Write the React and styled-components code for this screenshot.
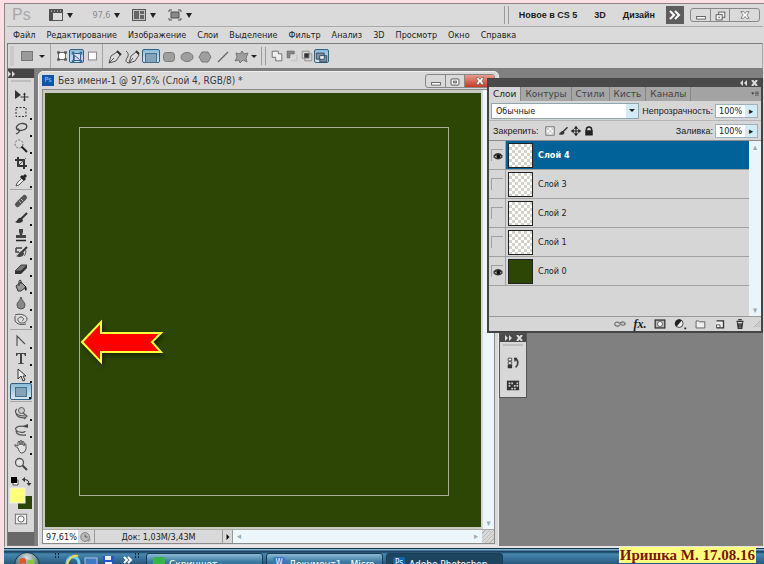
import React, { useState } from 'react'
import styled, { createGlobalStyle, css } from 'styled-components'

const menuItems = ['Файл', 'Редактирование', 'Изображение', 'Слои', 'Выделение', 'Фильтр', 'Анализ', '3D', 'Просмотр', 'Окно', 'Справка']

const toolGroups = [
  ['move', 'marquee', 'lasso', 'wand', 'crop', 'eyedropper'],
  ['heal', 'brush', 'stamp', 'history', 'eraser', 'bucket', 'blur', 'dodge'],
  ['path', 'type', 'select', 'rect'],
  ['rotate3d', 'orbit', 'hand', 'zoom'],
]

const shapeTools = ['pen', 'freePen', 'rect', 'rounded', 'ellipse', 'polygon', 'line', 'blob']

const startLayers = [
  { name: 'Слой 4', visible: true },
  { name: 'Слой 3', visible: false },
  { name: 'Слой 2', visible: false },
  { name: 'Слой 1', visible: false },
  { name: 'Слой 0', visible: true, filled: true },
]

// every drawing sits in a 16x16 box
const icons = {
  move: <><path d="M2 3v9l6-4z" fill="#333" /><path d="M11.500 6v8M7.500 10h8" stroke="#333" strokeWidth="1.200" /><path d="M10 7.500l1.500-2 1.500 2zM10 12.500l1.500 2 1.500-2z" fill="#333" /></>,
  marquee: <rect x="3" y="3.500" width="10" height="9" stroke="#333" strokeDasharray="2 1.500" />,
  lasso: <><path d="M5 9C1 7 5 2 10 2.500s5 5 0 6.500-6-1-5-1 2 3 0 4l-2 1" stroke="#444" strokeWidth="1.300" /></>,
  wand: <><circle cx="6" cy="6" r="4" stroke="#666" strokeDasharray="2 1.500" /><path d="M8.500 8.500L14 14" stroke="#222" strokeWidth="2" /></>,
  crop: <><path d="M5 2v9h9M2 5h9v9" stroke="#333" strokeWidth="2" /><path d="M4 12L13 3" stroke="#555" /></>,
  eyedropper: <><path d="M3 14l1-3 5-5 2 2-5 5z" fill="#eee" stroke="#555" /><path d="M8 4l4 4 M10 6l3-3" stroke="#222" strokeWidth="3" /></>,
  heal: <><path d="M4.500 11.500l7-7" stroke="#555" strokeWidth="5" strokeLinecap="round" /><path d="M6 8l2 2M8 6l2 2" stroke="#bbb" /></>,
  brush: <><path d="M14 3L8 9" stroke="#333" strokeWidth="2" /><path d="M8 8c-3-1-3 3-6 4 3 2 8 1 8-2z" fill="#333" /></>,
  stamp: <><path d="M6 2h4v3l-1 3h4v3H3V8h4L6 5z" fill="#444" /><path d="M3 13.500h10" stroke="#222" strokeWidth="1.500" /></>,
  history: <><path d="M3 4h6M3 4v4h3" stroke="#444" strokeWidth="1.500" /><path d="M14 3L9 8" stroke="#333" strokeWidth="2" /><path d="M9 7c-3 0-3 4-6 5 3 2 8 1 8-3z" fill="#444" /><path d="M11 4c3 2 2 6 0 8" stroke="#555" /></>,
  eraser: <><path d="M2 10l6-6h6l-6 6z" fill="#777" stroke="#444" /><path d="M2 10h6v3H2zM8 10l6-6v3l-6 6z" fill="#333" /></>,
  bucket: <><path d="M3 8l5-4 5 5-5 4H5z" fill="#999" stroke="#333" /><path d="M6 8V3q1.500-2 2 0v3" stroke="#333" /><path d="M12 8q3 2 1 5-2-1-1-5" fill="#222" /></>,
  blur: <path d="M8 2c1 4 4 5 4 8a4 4 0 0 1-8 0c0-3 3-4 4-8z" fill="#888" stroke="#555" />,
  dodge: <><path d="M2 3c5-2 12 0 12 4s-6 5-8 3-1-5 2-5 3 3 1 4" fill="#ddd" stroke="#555" /><path d="M2 4v5q3 5 11 3" stroke="#555" /></>,
  path: <path d="M4 13V3l8 8" stroke="#555" strokeWidth="1.200" />,
  type: <path d="M3 3h10v3h-1l-1-2H9v9l2 .5v.5H5v-.5l2-.5V4H5L4 6H3z" fill="#444" />,
  select: <path d="M5 2v10l3-3 2 5 2-1-2-4h3z" fill="#eee" stroke="#333" />,
  rect: <rect x="2.500" y="3.500" width="11" height="9" fill="#9a9a9a" stroke="#777" />,
  activeRect: <rect x="2.500" y="3.500" width="11" height="9" fill="#85a3b8" stroke="#47708c" />,
  rotate3d: <><circle cx="8.500" cy="5.500" r="3" fill="#ccc" stroke="#555" /><path d="M4 4c-4 3 0 7 8 7M3 8c0 4 6 5 10 5M10 8l4 3-3 3" stroke="#555" strokeWidth="1.200" /></>,
  orbit: <><path d="M13 5C7 3 1 5 3 8s9 3 9 1M3 9c1 5 6 4 10 4" stroke="#555" strokeWidth="1.300" /><path d="M10 4l5-2v4z" fill="#444" /></>,
  hand: <path d="M5 9L2 7q-1-2 1-1l2 1V3q1-2 2 0v3-4q1-1 2 0v4-3q1-1 2 0v4-2q2-1 2 1v4q-1 4-4 4H8q-2-1-3-5z" fill="#e2e2e2" stroke="#555" />,
  zoom: <><circle cx="6.500" cy="6.500" r="4" fill="#e4e4e4" stroke="#555" strokeWidth="1.300" /><path d="M9.500 9.500L14 14" stroke="#444" strokeWidth="2" /></>,
  frame: <><rect x="1.500" y="2.500" width="13" height="11" fill="#ddd" stroke="#555" /><path d="M1 2h14v4H1zM1 6h4v8H1z" fill="#505050" /><path d="M3 4h1M6 4h1M9 4h1M12 4h1" stroke="#ddd" /></>,
  arrange: <><rect x="1.500" y="2.500" width="13" height="11" fill="#c4c4c4" stroke="#555" /><path d="M3 4h5v8H3zM9 4h4v3H9zM9 8h4v4H9z" fill="#666" /></>,
  screen: <><rect x="4" y="5" width="8" height="6" fill="#888" stroke="#555" /><path d="M2 5V3h3M11 3h3v2M14 11v2h-3M5 13H2v-2" stroke="#555" /></>,
  shapeLayer: <><rect x="4" y="4" width="8" height="8" fill="#fff" stroke="#555" /><path d="M2.500 2.500h3v3h-3zM10.500 2.500h3v3h-3zM2.500 10.500h3v3h-3zM10.500 10.500h3v3h-3z" fill="#555" /></>,
  shapePath: <><path d="M4 4h8v8H4z" fill="#cde4f3" stroke="#347" /><path d="M2 2h3v3H2zM11 2h3v3h-3zM2 11h3v3H2zM11 11h3v3h-3z" fill="#357295" /><path d="M5 11V6l6 5" stroke="#347" /></>,
  pixels: <rect x="4" y="3.500" width="9" height="9" fill="#fff" stroke="#777" />,
  pen: <><path d="M2 14l2-7 6-4 3 3-4 6z" fill="#ddd" stroke="#555" /><path d="M2 14l5-5" stroke="#555" /><path d="M10 2l4 4" stroke="#333" strokeWidth="2" /></>,
  freePen: <><path d="M4 14l2-7 5-4 3 3-4 6z" fill="#ddd" stroke="#555" /><path d="M4 14l4-5M1 2q4 3 1 7t2 5" stroke="#555" /><path d="M11 2l3 3" stroke="#333" strokeWidth="2" /></>,
  rounded: <rect x="2.500" y="3.500" width="11" height="9" rx="3" fill="#9f9f9f" stroke="#777" />,
  ellipse: <ellipse cx="8" cy="8" rx="6" ry="4.500" fill="#9f9f9f" stroke="#777" />,
  polygon: <path d="M5 3h6l3 5-3 5H5L2 8z" fill="#9f9f9f" stroke="#777" />,
  line: <path d="M3 13L13 3" stroke="#666" strokeWidth="1.200" />,
  blob: <path d="M3 4l4 1 2-3 2 3 4-1-2 5 1 4-4-2-3 3-1-3-4 1 2-4z" fill="#9f9f9f" stroke="#777" />,
  add: <path d="M2.500 2.500h7v3h4v8h-7v-4h-4z" fill="#eee" stroke="#666" />,
  subtract: <><path d="M2.500 10V2.500h8v3h-5V10z" fill="#888" stroke="#666" /><path d="M6.500 13.500h7v-7" stroke="#bbb" /></>,
  intersect: <><path d="M2.500 2.500h8v8h-8zM5.500 5.500h8v8h-8z" stroke="#888" /><path d="M5 5h5v5H5z" fill="#333" /></>,
  exclude: <><path d="M1.500 3.500h9v7h-9zM5.500 6.500h8v7h-8z" fill="#7b93a3" stroke="#345" /><path d="M6 7h4v3H6z" fill="#eee" /></>,
  eye: <><path d="M2 7q6-6 12 0v3q-6 5-12 0z" fill="#333" /><path d="M3 9q5-4 10 0-5 3-10 0" fill="#bbb" /><circle cx="8.500" cy="8.500" r="2.500" fill="#111" /></>,
  checks: <><rect x="2.500" y="2.500" width="11" height="11" fill="#fff" stroke="#444" /><path d="M4 4h3v3H4zM10 4h3v3h-3zM7 7h3v3H7zM4 10h3v3H4zM10 10h3v3h-3z" fill="#ccc" /></>,
  arrows: <><path d="M8 3v10M3 8h10" stroke="#222" strokeWidth="1.500" /><path d="M5 5l3-4 3 4zM5 11l3 4 3-4zM5 5L1 8l4 3zM11 5l4 3-4 3z" fill="#222" /></>,
  lock: <><path d="M4.500 8V6a3.500 3.500 0 0 1 7 0v2" stroke="#222" strokeWidth="2" /><rect x="3" y="7" width="10" height="7" fill="#222" /></>,
  link: <path d="M8 9q-3 3-6 0 0-4 4-3l4 3q3 1 4-1-1-4-6-1" stroke="#777" strokeWidth="1.500" />,
  mask: <><rect x="2.500" y="3.500" width="11" height="9" fill="#bbb" stroke="#333" strokeWidth="1.500" /><circle cx="8" cy="8" r="2.800" fill="#fff" stroke="#555" /></>,
  quick: <><rect x="1.500" y="2.500" width="13" height="11" fill="#eee" stroke="#666" /><circle cx="8" cy="8" r="3.500" fill="#fff" stroke="#555" /></>,
  adjust: <><circle cx="7" cy="7.500" r="4.500" fill="#eee" stroke="#333" /><path d="M4 11A4.500 4.500 0 0 1 10 4z" fill="#222" /><path d="M13 12h2v2h-2z" fill="#222" /></>,
  folder: <path d="M3.500 12.500v-8h3l1 1h6v7z" fill="#eee" stroke="#555" />,
  newLayer: <><path d="M4 4.500h8v8H4" fill="#eee" stroke="#333" strokeWidth="1.500" /><path d="M4 9h4v3H4z" fill="#fff" stroke="#444" /></>,
  trash: <path d="M4 5h8M6 3h4M5 6l1 7h4l1-7M7 7v5M9 7v5" stroke="#333" strokeWidth="1.500" />,
  historyPanel: <><path d="M2.500 2.500h4v3h-4zM2.500 6.500h4v3h-4z" fill="#eee" stroke="#444" /><path d="M2 10h5v4H2z" fill="#333" /><path d="M10 3c4 1 5 6 1 10" stroke="#444" strokeWidth="2" /><path d="M9 2l4 0-3 5z" fill="#333" /></>,
  grid: <><rect x="1" y="3" width="14" height="11" fill="#333" /><path d="M3 5h2v2H3zM6 5h2v2H6zM12 5h2v2h-2zM3 8h2v2H3zM9 8h2v2H9zM12 8h2v2h-2zM6 11h2v2H6zM9 11h2v2H9z" fill="#ccc" /></>,
  minimize: <rect x="3" y="8.500" width="10" height="3" fill="#fff" stroke="#555" />,
  restore: <><rect x="6.500" y="3.500" width="7" height="6" fill="#eee" stroke="#555" /><rect x="3.500" y="6.500" width="7" height="6" fill="#eee" stroke="#555" /><path d="M6 9.500h2" stroke="#555" /></>,
  maximize: <><rect x="3.500" y="4.500" width="9" height="7" rx="1" fill="#fff" stroke="#444" /><rect x="6.500" y="7" width="3" height="2" stroke="#444" /></>,
  close: <path d="M2.500 3.500h3.500l2 2.500 2-2.500h3.500L10.500 8l3 4.500H10l-2-2.500-2 2.500H2.500l3-4.500z" fill="#fff" stroke="#666" />,
  chevrons: <path d="M3 4l4 4-4 4M8 4l4 4-4 4" stroke="#fff" strokeWidth="2" />,
  clock: <><circle cx="7" cy="8" r="5" fill="#bbb" stroke="#777" /><path d="M7 5v3h3" stroke="#555" /><path d="M10 9l4 2-4 3z" fill="#999" /></>,
}

const Icon = ({ name, size = 16 }) => (
  <Glyph $size={size} viewBox="0 0 16 16" aria-hidden="true">{icons[name]}</Glyph>
)

const WindowButtons = ({ middle, red }) => (
  <ButtonStrip>
    <StripButton aria-label="Свернуть"><Icon name="minimize" size={14} /></StripButton>
    <StripButton aria-label="Восстановить"><Icon name={middle} size={14} /></StripButton>
    <StripButton aria-label="Закрыть" $wide $red={red}><Icon name="close" size={12} /></StripButton>
  </ButtonStrip>
)

const AppHeader = () => (
  <AppBar>
    <Logo>Ps</Logo>
    <BarButton aria-label="Bridge"><Icon name="frame" /><Caret /></BarButton>
    <BarButton aria-label="Масштаб" $faint><ZoomValue>97,6</ZoomValue><Caret /></BarButton>
    <BarButton aria-label="Упорядочить документы"><Icon name="arrange" /><Caret /></BarButton>
    <BarButton aria-label="Режимы экрана"><Icon name="screen" /><Caret /></BarButton>
    <Spacer />
    <DoubleLine />
    <Workspaces>
      <WorkspaceButton>Новое в CS 5</WorkspaceButton>
      <WorkspaceButton>3D</WorkspaceButton>
      <WorkspaceButton>Дизайн</WorkspaceButton>
    </Workspaces>
    <MoreButton aria-label="Ещё"><Icon name="chevrons" /></MoreButton>
    <WindowButtons middle="restore" />
  </AppBar>
)

const Options = () => (
  <OptionsBar>
    <Grip />
    <PresetButton aria-label="Набор параметров"><Icon name="rect" /><Caret $small /></PresetButton>
    <Line />
    <OptionGroup>
      {['shapeLayer', 'shapePath', 'pixels'].map(n => (
        <OptionButton key={n} aria-label={n} $width={15} $active={n === 'shapePath'}><Icon name={n} size={14} /></OptionButton>
      ))}
    </OptionGroup>
    <Line />
    <OptionGroup>
      {shapeTools.map(n => (
        <OptionButton key={n} aria-label={n} $width={18} $active={n === 'rect'}><Icon name={n === 'rect' ? 'activeRect' : n} /></OptionButton>
      ))}
      <OptionButton aria-label="Параметры фигуры" $width={8}><Caret $small /></OptionButton>
    </OptionGroup>
    <DoubleLine />
    <OptionGroup>
      {['add', 'subtract', 'intersect', 'exclude'].map(n => (
        <OptionButton key={n} aria-label={n} $width={15} $active={n === 'exclude'}><Icon name={n} size={14} /></OptionButton>
      ))}
    </OptionGroup>
  </OptionsBar>
)

const Toolbox = () => {
  const [tool, setTool] = useState('rect')
  return (
    <ToolColumn>
      <ToolHead><Arrows viewBox="0 0 8 6"><path d="M0 0l3 3-3 3zM4 0l3 3-3 3z" fill="#ddd" /></Arrows></ToolHead>
      <ToolBody>
        <TopGrip />
        {toolGroups.map(group => (
          <ToolGroup key={group[0]}>
            {group.map(n => (
              <ToolButton key={n} aria-label={n} $active={n === tool} $plain={n === 'move' || n === 'zoom'} onClick={() => setTool(n)}>
                <Icon name={n === 'rect' && tool === n ? 'activeRect' : n} />
              </ToolButton>
            ))}
          </ToolGroup>
        ))}
        <Swatches viewBox="0 0 26 34" role="img" aria-label="Цвета">
          <path d="M5 4h5v5H5z" fill="#fff" stroke="#555" />
          <path d="M3 1h6v6H3z" fill="#000" />
          <path d="M17 3.500q4 0 4 4" fill="none" stroke="#333" />
          <path d="M17 1v5l-3-2.500zM18.500 7h5L21 10z" fill="#333" />
          <rect x="10" y="20" width="14" height="13" fill="#2b4506" />
          <rect x="2" y="12" width="15" height="15" fill="#ffff7a" stroke="#eee" />
        </Swatches>
        <QuickMask aria-label="Быстрая маска"><Icon name="quick" size={14} /></QuickMask>
      </ToolBody>
    </ToolColumn>
  )
}

const DocumentWindow = () => (
  <Doc>
    <TitleBar>
      <PsBadge>Ps</PsBadge>
      <DocTitle>Без имени-1 @ 97,6% (Слой 4, RGB/8) *</DocTitle>
      <WindowButtons middle="maximize" red />
    </TitleBar>
    <DocFrame>
      <CanvasRow>
        <Canvas>
          <Outline />
          <Pointer viewBox="0 0 86 48" aria-hidden="true">
            <path d="M2 22L21 2v11h60l-9 9 9 10H21v10z" fill="#ff0000" stroke="#ffff3c" strokeWidth="2" />
          </Pointer>
        </Canvas>
        <ScrollTrack><ScrollArrow>▾</ScrollArrow></ScrollTrack>
      </CanvasRow>
      <StatusBar>
        <ZoomInput aria-label="Масштаб документа" defaultValue="97,61%" />
        <StatusButton aria-label="Version Cue"><Icon name="clock" size={14} /></StatusButton>
        <DocSize>Док: 1,03M/3,43M</DocSize>
        <StatusMenu aria-label="Меню состояния"><Arrows viewBox="0 0 8 8"><path d="M2 0l4 4-4 4z" fill="#111" /></Arrows></StatusMenu>
        <BottomTrack><ScrollArrow>◂</ScrollArrow><ScrollArrow>▸</ScrollArrow></BottomTrack>
        <Corner />
      </StatusBar>
    </DocFrame>
  </Doc>
)

const LayersPanel = () => {
  const [layers, setLayers] = useState(startLayers)
  const [active, setActive] = useState('Слой 4')
  const toggle = name => setLayers(layers.map(l => (l.name === name ? { ...l, visible: !l.visible } : l)))

  return (
    <Panel>
      <PanelHead>
        <Arrows viewBox="0 0 8 6"><path d="M3 0L0 3l3 3zM7 0L4 3l3 3z" fill="#ddd" /></Arrows>
        <Arrows viewBox="0 0 8 6"><path d="M1 0l5 6M6 0L1 6" stroke="#ddd" strokeWidth="2" /></Arrows>
      </PanelHead>
      <Tabs role="tablist">
        {['Слои', 'Контуры', 'Стили', 'Кисть', 'Каналы'].map((t, i) => (
          <Tab key={t} role="tab" aria-selected={i === 0} $active={i === 0}>{t}</Tab>
        ))}
        <Spacer />
        <PanelMenu aria-label="Меню панели"><Arrows viewBox="0 0 10 8"><path d="M0 2h4L2 5z" fill="#333" /><path d="M5 1.500h5M5 3.500h5M5 5.500h5" stroke="#444" /></Arrows></PanelMenu>
      </Tabs>
      <FieldRow>
        <SelectBox>
          <BlendSelect aria-label="Режим наложения"><option>Обычные</option></BlendSelect>
          <SelectArrow><Caret $small /></SelectArrow>
        </SelectBox>
        <FieldLabel htmlFor="opacity">Непрозрачность:</FieldLabel>
        <Percent>
          <PercentInput id="opacity" defaultValue="100%" />
          <PercentButton aria-label="Изменить непрозрачность">▸</PercentButton>
        </Percent>
      </FieldRow>
      <FieldRow $last>
        <LockLabel>Закрепить:</LockLabel>
        {['checks', 'brush', 'arrows', 'lock'].map(n => (
          <LockButton key={n} aria-label={n}><Icon name={n} size={12} /></LockButton>
        ))}
        <Spacer />
        <FieldLabel htmlFor="fill">Заливка:</FieldLabel>
        <Percent>
          <PercentInput id="fill" defaultValue="100%" />
          <PercentButton aria-label="Изменить заливку">▸</PercentButton>
        </Percent>
      </FieldRow>
      <ListArea>
        <LayerList>
          {layers.map(l => (
            <LayerRow key={l.name}>
              <EyeCell>
                <EyeButton aria-label={'Видимость ' + l.name} onClick={() => toggle(l.name)}>
                  {l.visible && <Icon name="eye" size={12} />}
                </EyeButton>
              </EyeCell>
              <LayerButton $active={l.name === active} onClick={() => setActive(l.name)}>
                <Thumb $filled={l.filled} />
                {l.name}
              </LayerButton>
            </LayerRow>
          ))}
        </LayerList>
        <ListTrack><ScrollArrow>▴</ScrollArrow><ScrollArrow>▾</ScrollArrow></ListTrack>
      </ListArea>
      <PanelFoot>
        <FootButton aria-label="Связать слои"><Icon name="link" size={14} /></FootButton>
        <FootButton aria-label="Стиль слоя"><Fx>fx.</Fx></FootButton>
        {['mask', 'adjust', 'folder', 'newLayer', 'trash'].map(n => (
          <FootButton key={n} aria-label={n}><Icon name={n} size={14} /></FootButton>
        ))}
        <Resize viewBox="0 0 10 10"><path d="M1 9l8-8M4 9l5-5M7 9l2-2" stroke="#aaa" /></Resize>
      </PanelFoot>
    </Panel>
  )
}

const MiniDock = () => (
  <Mini>
    <PanelHead>
      <Arrows viewBox="0 0 8 6"><path d="M0 0l3 3-3 3zM4 0l3 3-3 3z" fill="#ddd" /></Arrows>
      <Arrows viewBox="0 0 8 6"><path d="M1 0l5 6M6 0L1 6" stroke="#ddd" strokeWidth="2" /></Arrows>
    </PanelHead>
    <MiniBody>
      <TopGrip />
      <MiniButton aria-label="История"><Icon name="historyPanel" size={14} /></MiniButton>
      <MiniButton aria-label="Образцы"><Icon name="grid" size={14} /></MiniButton>
    </MiniBody>
  </Mini>
)

const Taskbar = () => (
  <TaskStrip>
    <StartButton aria-label="Пуск">
      <Flag viewBox="0 0 26 26">
        <path d="M5 7q4-3 7 0v5q-3-2-7 0z" fill="#e8561e" /><path d="M13 7q4 2 8-1v5q-4 3-8 1z" fill="#8cc63f" />
        <path d="M5 13q4-2 7 0v5q-3-2-7 0z" fill="#3aa0dc" /><path d="M13 13q4 2 8-1v5q-4 3-8 1z" fill="#fbc51d" />
      </Flag>
    </StartButton>
    <QuickLaunch viewBox="0 0 92 16" aria-hidden="true">
      <path d="M3 5h1M6 5h1M3 8h1M6 8h1M83 5h1M86 5h1M83 8h1M86 8h1" stroke="#0a2c40" strokeWidth="2" />
      <circle cx="21" cy="14" r="6" fill="none" stroke="#6fd0f5" strokeWidth="3" /><path d="M15 15Q19 5 26 7" fill="none" stroke="#f4d64e" strokeWidth="2" />
      <rect x="33" y="9" width="12" height="9" fill="#3f79c4" stroke="#a9c8e2" />
      <rect x="51" y="7" width="11" height="12" fill="#2356c9" /><path d="M53 7h6v4h-6zM53 13h7v5h-7z" fill="#eee" />
      <path d="M72 8l3 3-3 3M76 8l3 3-3 3" stroke="#fff" fill="none" strokeWidth="2" />
    </QuickLaunch>
    <TaskButton><TaskIcon $color="#38b54a" />Скриншот</TaskButton>
    <TaskButton><TaskIcon $color="#3a74c4">W</TaskIcon>Документ1 - Micro...</TaskButton>
    <TaskButton $active><TaskIcon $color="#0c66b0">Ps</TaskIcon>Adobe Photoshop...</TaskButton>
  </TaskStrip>
)

const App = () => (
  <>
    <GlobalStyle />
    <Page>
      <AppFrame>
        <AppHeader />
        <MenuBar>
          {menuItems.map(m => <MenuButton key={m}>{m}</MenuButton>)}
        </MenuBar>
        <Options />
        <Desktop>
          <Toolbox />
          <DocumentWindow />
          <LayersPanel />
          <MiniDock />
        </Desktop>
      </AppFrame>
      <Taskbar />
      <Signature>Иришка М. 17.08.16</Signature>
    </Page>
  </>
)

export default App

const GlobalStyle = createGlobalStyle`
  * { box-sizing: border-box; }
  body { margin: 0; background: #fbdfe5; }
  button, input, select {
    font: inherit;
    color: inherit;
    margin: 0;
    padding: 0;
    border: 0;
    border-radius: 0;
    background: none;
    outline: none;
  }
`

const activeTool = css`
  border: 1px solid #2f6285;
  border-radius: 2px;
  background: linear-gradient(#8cbcd9, #d5e8f3);
`

const Page = styled.div`
  position: relative;
  display: flex;
  flex-direction: column;
  height: 100vh;
  padding: 3px 0 0 4px;
  overflow: hidden;
  color: #1c1c1c;
  font: 9px/14px 'DejaVu Sans Condensed', 'DejaVu Sans', sans-serif;
`
const AppFrame = styled.div`
  flex: 1;
  min-height: 0;
  display: flex;
  flex-direction: column;
  padding: 0 1px 0 2px;
  border: 1px solid #8d8587;
  border-right: 0;
  border-bottom: 2px solid #e4e4e4;
  background: #dadada;
`
const Glyph = styled.svg`
  flex: none;
  display: block;
  fill: none;
  width: ${p => p.$size}px;
  height: ${p => p.$size}px;
`
const Spacer = styled.div`flex: 1;`
const Caret = styled.span`
  flex: none;
  border: solid transparent;
  border-width: ${p => (p.$small ? '3px 3px 0' : '5px 3px 0')};
  border-top-color: #222;
`
const Line = styled.div`
  width: 1px;
  height: 24px;
  margin: 0 3px;
  background: #a5a5a5;
`
const DoubleLine = styled.div`
  width: 5px;
  height: 18px;
  margin: 0 3px;
  border: solid #9a9a9a;
  border-width: 0 1px;
`
const Arrows = styled.svg`
  display: block;
  width: 8px;
  height: 6px;
`

const AppBar = styled.header`
  flex: none;
  display: flex;
  align-items: center;
  height: 23px;
  padding: 0 3px 0 5px;
  border-bottom: 1px solid #a9a9a9;
`
const Logo = styled.div`
  width: 36px;
  color: #a8a8a8;
  font: 16px/20px 'Liberation Sans', sans-serif;
`
const BarButton = styled.button`
  display: flex;
  align-items: center;
  gap: 3px;
  margin-right: 11px;
  padding-left: ${p => (p.$faint ? '8px' : 0)};
`
const ZoomValue = styled.span`
  width: 19px;
  color: #8c8c8c;
`
const Workspaces = styled.div`
  display: flex;
  gap: 17px;
  margin: 0 11px 0 7px;
`
const WorkspaceButton = styled.button`
  font: bold 9px/14px 'Liberation Sans', sans-serif;
`
const MoreButton = styled.button`
  display: grid;
  place-items: center;
  width: 18px;
  height: 18px;
  margin-right: 6px;
  background: #5d5d5d;
`
const ButtonStrip = styled.div`
  flex: none;
  display: flex;
  height: 14px;
  border: 1px solid #888;
  border-radius: 3px;
  overflow: hidden;
`
const StripButton = styled.button`
  display: grid;
  place-items: center;
  width: ${p => (p.$wide ? '30px' : '19px')};
  & + & { border-left: 1px solid #888; }
  ${p => p.$red && css`background: linear-gradient(#e99b8d, #c53a26);`}
`

const MenuBar = styled.nav`
  flex: none;
  display: flex;
  align-items: center;
  gap: 11px;
  height: 16px;
  padding: 0 6px;
`
const MenuButton = styled.button`
  white-space: nowrap;
`

const OptionsBar = styled.div`
  flex: none;
  display: flex;
  align-items: center;
  height: 26px;
  border: 1px solid #7d7d7d;
  border-right-color: #aaa;
  background: #d8d8d8;
`
const Grip = styled.div`
  width: 4px;
  height: 20px;
  margin: 0 5px 0 2px;
  background: #cacaca;
`
const PresetButton = styled.button`
  display: flex;
  align-items: center;
  gap: 4px;
  width: 28px;
`
const OptionGroup = styled.div`
  display: flex;
  align-items: center;
`
const OptionButton = styled.button`
  display: grid;
  place-items: center;
  width: ${p => p.$width}px;
  height: 14px;
  ${p => p.$active && activeTool}
`

const Desktop = styled.main`
  position: relative;
  flex: 1;
  min-height: 0;
  display: flex;
  align-items: stretch;
  gap: 3px;
  background: #808080;
`

const ToolColumn = styled.aside`
  flex: none;
  width: 28px;
  border: 1px solid #777;
  border-top: 0;
  background: #696969;
`
const ToolHead = styled.div`
  display: flex;
  align-items: center;
  height: 9px;
  background: #454545;
`
const ToolBody = styled.div`
  padding-bottom: 4px;
  background: #d8d8d8;
`
const TopGrip = styled.div`
  width: 20px;
  height: 4px;
  margin: 0 auto 4px;
  border: solid #bebebe;
  border-width: 0 0 2px;
`
const ToolGroup = styled.div`
  margin: 0 2px 2px;
  padding-bottom: 1px;
  border-bottom: 1px solid #a5a5a5;
  &:last-of-type { border-color: transparent; }
`
const ToolButton = styled.button`
  position: relative;
  display: grid;
  place-items: center;
  width: 22px;
  height: 17px;
  padding-right: 1px;
  ${p => p.$active && activeTool}
  &::after {
    content: '';
    display: ${p => (p.$plain ? 'none' : 'block')};
    position: absolute;
    right: 0;
    bottom: 0;
    border: solid #111;
    border-width: 0 2px 2px 0;
  }
`
const Swatches = styled.svg`
  display: block;
  width: 26px;
  height: 34px;
  fill: none;
`
const QuickMask = styled.button`
  display: grid;
  place-items: center;
  width: 26px;
  height: 18px;
`

const Doc = styled.section`
  display: flex;
  flex-direction: column;
  width: 461px;
  margin-top: 2px;
  padding: 0 3px 1px;
  border: 1px solid #eee;
  border-radius: 5px 5px 0 0;
  background: #d9d9d9;
`
const TitleBar = styled.div`
  flex: none;
  display: flex;
  align-items: center;
  gap: 4px;
  height: 17px;
`
const PsBadge = styled.span`
  width: 12px;
  height: 11px;
  background: #0d57a5;
  color: #9fd0ff;
  font-size: 7px;
  line-height: 11px;
  text-align: center;
`
const DocTitle = styled.h1`
  flex: 1;
  margin: 0;
  color: #3b3b3b;
  font: 10px/14px 'DejaVu Sans Condensed', sans-serif;
  white-space: nowrap;
`
const DocFrame = styled.div`
  flex: 1;
  min-height: 0;
  display: flex;
  flex-direction: column;
  border: 1px solid #8a8a8a;
`
const CanvasRow = styled.div`
  flex: 1;
  min-height: 0;
  display: flex;
`
const Canvas = styled.div`
  position: relative;
  flex: 1;
  display: flex;
  padding: 34px 32px 31px 34px;
  border: solid #c9cbc1;
  border-width: 3px 0 2px 2px;
  background: #2d4605;
`
const Outline = styled.div`
  flex: 1;
  border: 1px solid #a9b297;
`
const Pointer = styled.svg`
  position: absolute;
  left: 35px;
  top: 227px;
  width: 86px;
  height: 48px;
  overflow: visible;
  filter: drop-shadow(2px 3px 2px #1a2a02);
`
const ScrollTrack = styled.div`
  display: flex;
  flex-direction: column;
  justify-content: flex-end;
  width: 13px;
  border-left: 2px solid #d5d8d2;
  background: #edf6fb;
`
const ScrollArrow = styled.span`
  color: #9dabb2;
  line-height: 12px;
  text-align: center;
`
const StatusBar = styled.div`
  flex: none;
  display: flex;
  align-items: stretch;
  height: 14px;
  border-top: 1px solid #aaa;
`
const ZoomInput = styled.input`
  width: 35px;
  padding-left: 3px;
  background: #fff;
`
const StatusButton = styled.button`
  display: grid;
  place-items: center;
  width: 17px;
  border-right: 1px solid #999;
`
const DocSize = styled.span`
  width: 127px;
  text-align: center;
`
const StatusMenu = styled.button`
  display: grid;
  place-items: center;
  width: 11px;
  border: solid #999;
  border-width: 0 1px;
`
const BottomTrack = styled.div`
  flex: 1;
  display: flex;
  justify-content: space-between;
  padding: 0 4px;
  background: #edf6fb;
`
const Corner = styled.div`
  width: 12px;
  background: repeating-linear-gradient(135deg, #d9d9d9 0 2px, #bcbcbc 2px 3px);
`

// floating palettes
const Panel = styled.section`
  position: absolute;
  right: 0;
  top: 9px;
  width: 276px;
  border: 1px solid #444;
  border-width: 1px 2px 2px;
  background: #d6d6d6;
`
const PanelHead = styled.div`
  display: flex;
  align-items: center;
  justify-content: flex-end;
  gap: 3px;
  height: 8px;
  padding-right: 2px;
  background: #4a4a4a;
`
const Tabs = styled.div`
  display: flex;
  height: 14px;
  background: #a3a3a3;
`
const Tab = styled.button`
  padding: 0 4px;
  border-right: 1px solid #858585;
  background: ${p => (p.$active ? '#d6d6d6' : '#a6a6a6')};
  color: ${p => (p.$active ? '#222' : '#444')};
  font: 9px/14px 'DejaVu Sans', sans-serif;
`
const PanelMenu = styled.button`
  padding-right: 2px;
`
const FieldRow = styled.div`
  display: flex;
  align-items: center;
  height: 20px;
  padding: 0 3px 0 2px;
  border-bottom: 1px solid ${p => (p.$last ? '#8c8c8c' : '#b5b5b5')};
`
const SelectBox = styled.div`
  position: relative;
  flex: 1;
  margin-right: 3px;
`
const BlendSelect = styled.select`
  display: block;
  width: 100%;
  height: 16px;
  padding-left: 4px;
  border: 1px solid #8fa5b0;
  background: #fff;
  appearance: none;
`
const SelectArrow = styled.span`
  position: absolute;
  right: 1px;
  top: 1px;
  display: grid;
  place-items: center;
  width: 12px;
  height: 14px;
  background: #d3ebf7;
  pointer-events: none;
`
const FieldLabel = styled.label`
  margin-right: 2px;
  font-family: 'Liberation Sans', sans-serif;
`
const Percent = styled.div`
  display: flex;
  height: 14px;
  border: 1px solid #9fb2bc;
  background: #fff;
`
const PercentInput = styled.input`
  width: 29px;
  padding-left: 3px;
`
const PercentButton = styled.button`
  width: 12px;
  background: #d3ebf7;
  line-height: 12px;
`
const LockLabel = styled.span`
  margin: 0 5px 0 2px;
  font-family: 'Liberation Sans', sans-serif;
`
const LockButton = styled.button`
  width: 13px;
  height: 12px;
`
const ListArea = styled.div`
  display: flex;
  height: 175px;
`
const LayerList = styled.ul`
  flex: 1;
  margin: 0;
  padding: 0;
  list-style: none;
`
const LayerRow = styled.li`
  display: flex;
  height: 29px;
  border-bottom: 1px solid #a0a0a0;
`
const EyeCell = styled.div`
  display: grid;
  place-items: center;
  width: 17px;
  border-right: 1px solid #a0a0a0;
`
const EyeButton = styled.button`
  display: grid;
  place-items: center;
  width: 12px;
  height: 12px;
  border: solid #a0a0a0;
  border-width: 1px 0 0 1px;
`
const LayerButton = styled.button`
  flex: 1;
  display: flex;
  align-items: center;
  gap: 5px;
  padding-left: 2px;
  background: ${p => (p.$active ? '#006299' : 'transparent')};
  color: ${p => (p.$active ? '#fff' : '#1c1c1c')};
  font-weight: ${p => (p.$active ? 'bold' : 'normal')};
`
const Thumb = styled.span`
  width: 25px;
  height: 25px;
  border: 1px solid #222;
  background: ${p => (p.$filled ? '#2d4605' : 'repeating-conic-gradient(#d3d3ca 0 25%, #fff 0 50%) 0 0 / 6px 6px')};
`
const ListTrack = styled.div`
  display: flex;
  flex-direction: column;
  justify-content: space-between;
  width: 12px;
  background: #e9f5fb;
`
const PanelFoot = styled.div`
  display: flex;
  align-items: center;
  justify-content: flex-end;
  gap: 6px;
  height: 15px;
  border-top: 1px solid #999;
`
const FootButton = styled.button`
  width: 14px;
  height: 14px;
`
const Fx = styled.span`
  display: block;
  font: italic bold 12px/12px 'Liberation Serif', serif;
`
const Resize = styled.svg`
  width: 8px;
  height: 10px;
`
const Mini = styled.section`
  position: absolute;
  left: 492px;
  top: 264px;
  width: 28px;
  border: 1px solid #555;
  background: #d8d8d8;
`
const MiniBody = styled.div`
  display: flex;
  flex-direction: column;
  align-items: center;
  gap: 3px;
  height: 55px;
`
const MiniButton = styled.button`
  display: grid;
  place-items: center;
  width: 20px;
  height: 19px;
`

const TaskStrip = styled.footer`
  flex: none;
  display: flex;
  align-items: flex-start;
  height: 16px;
  overflow: hidden;
  border-top: 1px solid #15384e;
  background: linear-gradient(#7fb0ce 0 1px, #1b4562 2px 3px, #4787b0 5px, #28597c);
`
const StartButton = styled.button`
  flex: none;
  width: 26px;
  height: 26px;
  margin: 3px 12px 0 10px;
  border: 1px solid #16384d;
  border-radius: 50%;
  background: radial-gradient(circle at 50% 20%, #d8dfe2, #4f6c79 60%);
`
const Flag = styled.svg`
  display: block;
  width: 24px;
  height: 24px;
`
const QuickLaunch = styled.svg`
  flex: none;
  width: 92px;
  height: 16px;
  margin-right: 2px;
`
const TaskButton = styled.button`
  flex: 0 1 117px;
  display: flex;
  align-items: center;
  gap: 4px;
  height: 24px;
  margin: 4px 3px 0 0;
  padding: 0 6px;
  border: 1px solid #1a3d54;
  border-radius: 3px;
  background: ${p => (p.$active ? '#1d4560' : 'linear-gradient(#8db9d4, #3a789f 8px)')};
  color: #fff;
  font-size: 10px;
  white-space: nowrap;
  overflow: hidden;
`
const TaskIcon = styled.span`
  flex: none;
  width: 12px;
  height: 16px;
  border-radius: 2px;
  background: ${p => p.$color};
  font-size: 8px;
  line-height: 12px;
`
const Signature = styled.div`
  position: absolute;
  right: 8px;
  bottom: 1px;
  padding: 0 1px;
  background: #ffff7d;
  color: #7b1408;
  font: bold 15px/16px 'Liberation Serif', serif;
`
